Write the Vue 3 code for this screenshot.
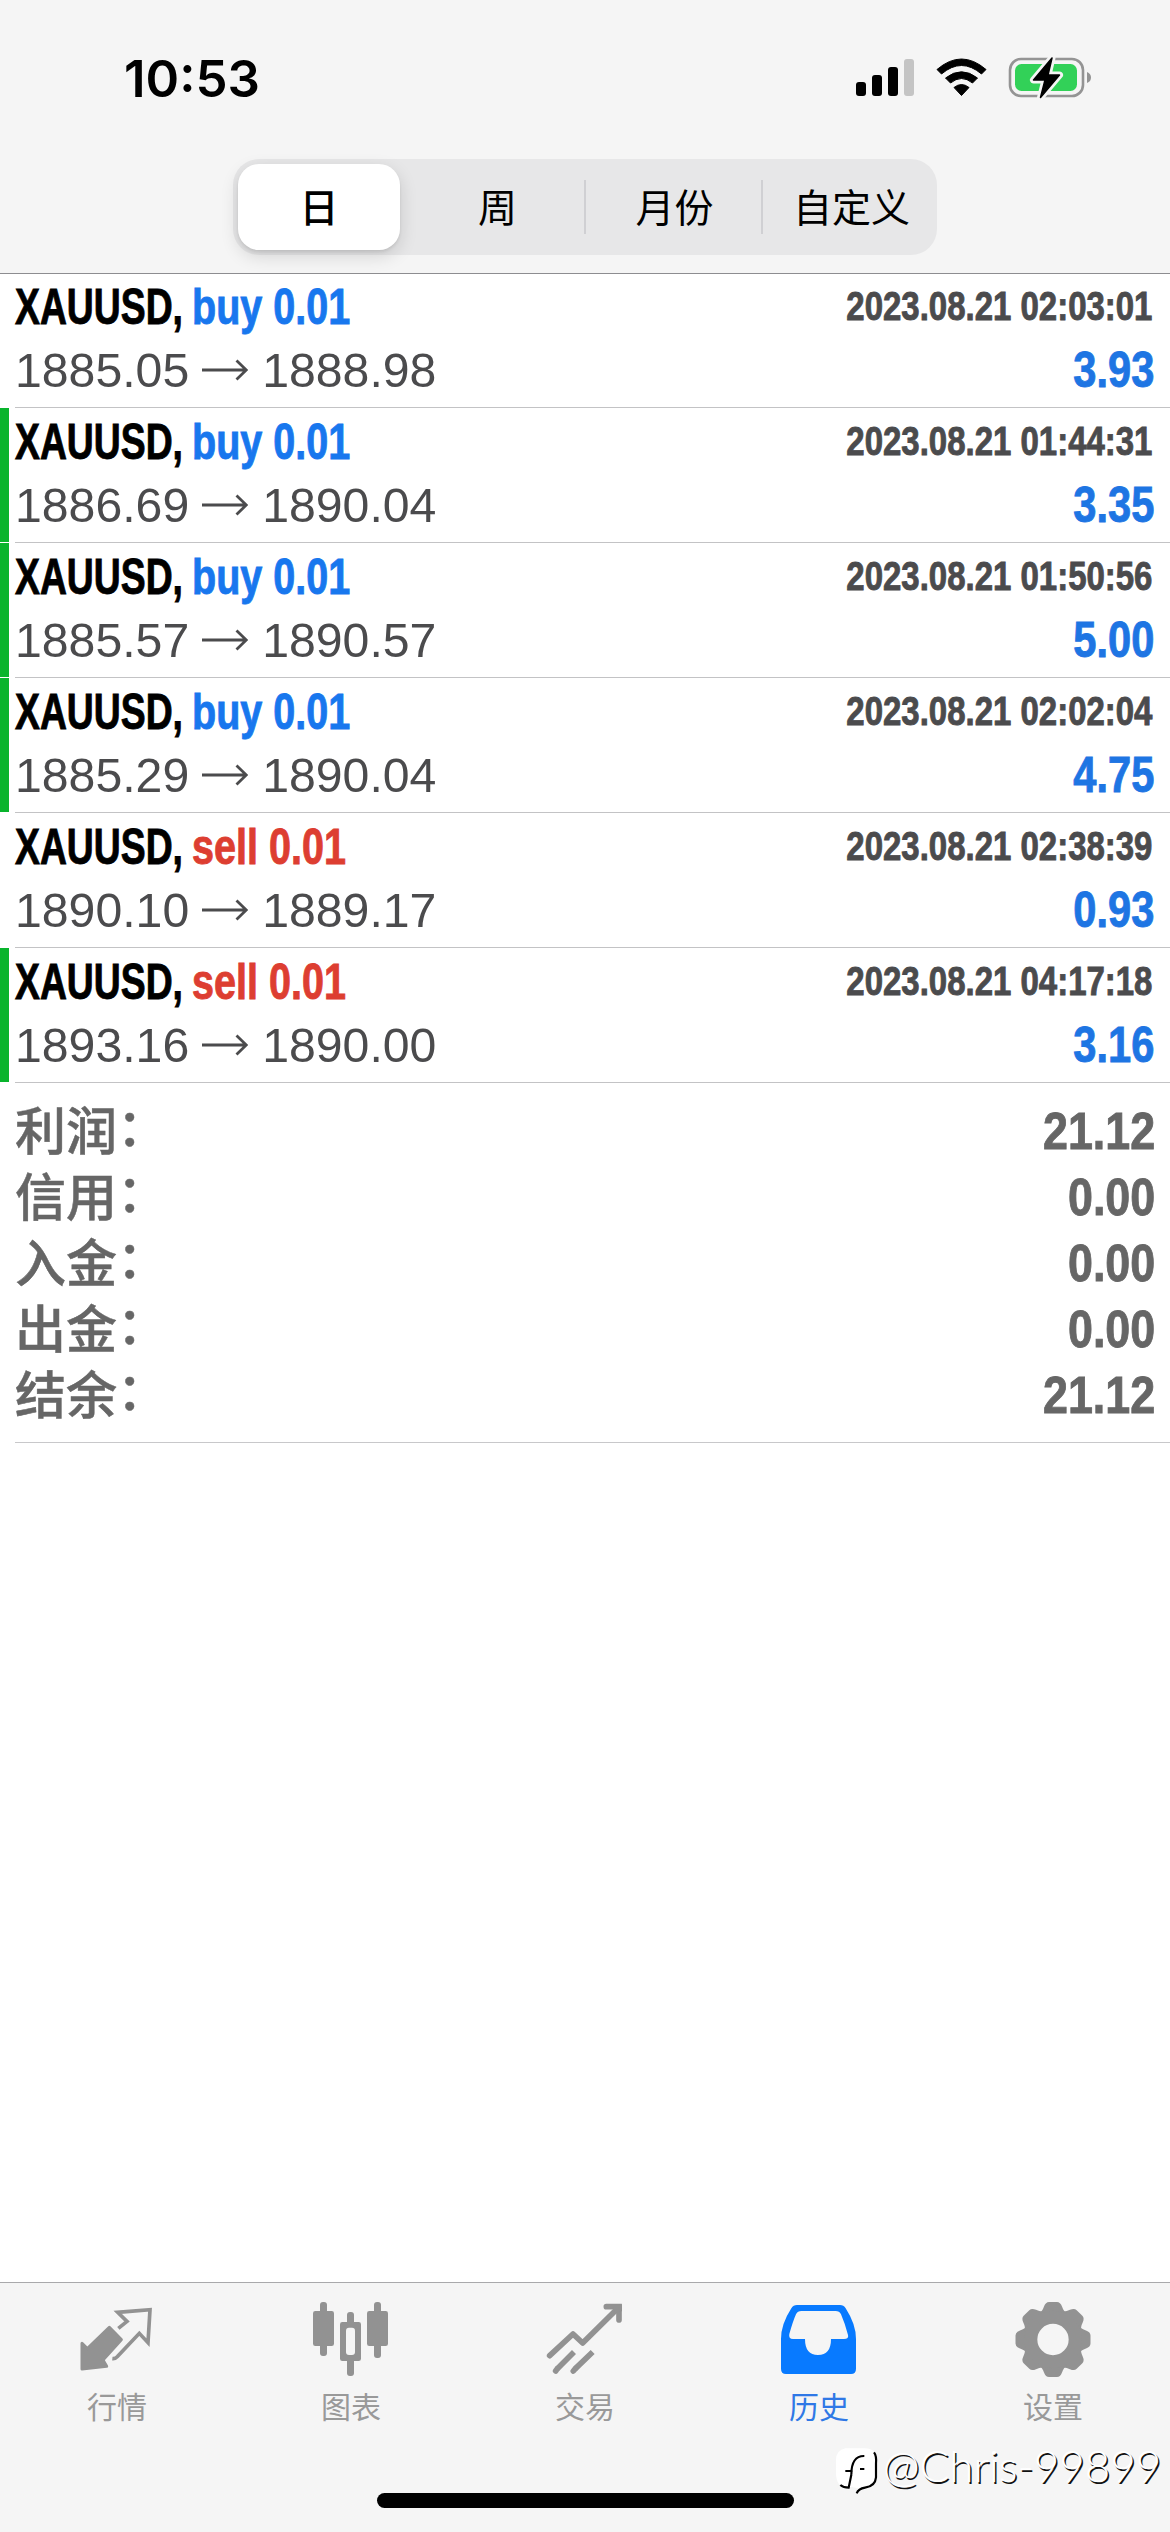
<script setup>
const segments = ['日', '周', '月份', '自定义']

const deals = [
  { side: 'buy', open: '1885.05', close: '1888.98', time: '2023.08.21 02:03:01', profit: '3.93', mark: false },
  { side: 'buy', open: '1886.69', close: '1890.04', time: '2023.08.21 01:44:31', profit: '3.35', mark: true },
  { side: 'buy', open: '1885.57', close: '1890.57', time: '2023.08.21 01:50:56', profit: '5.00', mark: true },
  { side: 'buy', open: '1885.29', close: '1890.04', time: '2023.08.21 02:02:04', profit: '4.75', mark: true },
  { side: 'sell', open: '1890.10', close: '1889.17', time: '2023.08.21 02:38:39', profit: '0.93', mark: false },
  { side: 'sell', open: '1893.16', close: '1890.00', time: '2023.08.21 04:17:18', profit: '3.16', mark: true },
]

const totals = [
  ['利润', '21.12'],
  ['信用', '0.00'],
  ['入金', '0.00'],
  ['出金', '0.00'],
  ['结余', '21.12'],
]
</script>

<template>
  <div class="screen">
    <header class="top">
      <div class="status">
        <span class="clock">10:53</span>
        <svg class="indicators" width="240" height="46" viewBox="852 54 240 46">
          <rect x="856" y="82" width="10" height="14" rx="3" />
          <rect x="872" y="75" width="10" height="21" rx="3" />
          <rect x="888" y="67" width="10" height="29" rx="3" />
          <rect x="904" y="59" width="10" height="37" rx="3" fill="#c4c4c4" />
          <path d="M937 69.500Q961.500 48.500 986 69.500L981.500 74Q961.500 57 941.500 74Z" stroke="#000" stroke-width="1" stroke-linejoin="round" />
          <path d="M945.500 78Q961.500 65.500 977.500 78L972.500 83Q961.500 74 950.500 83Z" stroke="#000" stroke-width="1" stroke-linejoin="round" />
          <path d="M954 87.500Q961.500 81.500 969 87.500L961.500 95.500Z" stroke="#000" stroke-width="1" stroke-linejoin="round" />
          <rect x="1010" y="59" width="73" height="37" rx="11" fill="none" stroke="#949494" stroke-width="2.600" />
          <rect x="1015" y="64" width="62" height="27" rx="6.500" fill="#32d158" />
          <path d="M1087 72Q1091 73.500 1091 77.500T1087 83Z" fill="#949494" />
          <path d="M1052 58L1033.500 80H1045L1040.500 97.500L1059.500 75H1048Z" fill="#000" stroke="#f5f5f5" stroke-width="7" stroke-linejoin="round" />
          <path d="M1052 58L1033.500 80H1045L1040.500 97.500L1059.500 75H1048Z" stroke="#000" stroke-width="1.500" stroke-linejoin="round" />
        </svg>
      </div>
      <div class="segmented">
        <div v-for="(s, i) in segments" :key="s" class="segment" :class="{ active: i === 0, split: i > 1 }">
          <span>{{ s }}</span>
        </div>
      </div>
    </header>

    <main class="content">
      <section v-for="(d, i) in deals" :key="i" class="deal" :class="{ marked: d.mark }">
        <div class="deal-body">
          <div class="line">
            <div class="title">
              <div class="symbol-cell"><span class="condensed symbol">XAUUSD,</span></div>
              <span class="condensed side" :class="d.side">{{ d.side }} 0.01</span>
            </div>
            <span class="condensed time">{{ d.time }}</span>
          </div>
          <div class="line">
            <div class="prices">
              <span>{{ d.open }}</span>
              <svg width="46" height="22" viewBox="0 0 46 22" fill="none" stroke="#4b4b4d" stroke-width="2.800"><path d="M0 11H44M34.500 1.500L44.300 11L34.500 20.500" /></svg>
              <span>{{ d.close }}</span>
            </div>
            <span class="condensed profit">{{ d.profit }}</span>
          </div>
        </div>
      </section>

      <section class="totals">
        <div v-for="t in totals" :key="t[0]" class="total">
          <span class="label">{{ t[0] }}<span class="colon">：</span></span>
          <span class="condensed amount">{{ t[1] }}</span>
        </div>
      </section>
    </main>

    <nav class="tabs">
      <div class="tab">
        <svg viewBox="234 90 234 234">
          <path d="M328 172L364 209L309 270L320 289L246 297V220L262 236Z" fill="currentColor" stroke="currentColor" stroke-width="9" stroke-linejoin="round" />
          <path d="M355 175L381 154L353 127L450 119L444 218L418 190L353 259Q346 267 337 266" fill="none" stroke="currentColor" stroke-width="11" />
        </svg>
        <span>行情</span>
      </div>
      <div class="tab">
        <svg viewBox="936 90 234 234" fill="currentColor">
          <rect x="960" y="96" width="21" height="162" rx="9" />
          <rect x="939" y="123" width="63" height="105" rx="7" />
          <rect x="1122" y="96" width="21" height="168" rx="9" />
          <rect x="1101" y="123" width="63" height="105" rx="7" />
          <rect x="1041" y="126" width="21" height="192" rx="9" />
          <rect x="1020" y="156" width="63" height="117" rx="7" />
          <rect x="1038" y="173" width="27" height="82" rx="9" fill="#f5f5f5" />
        </svg>
        <span>图表</span>
      </div>
      <div class="tab">
        <svg viewBox="198 90 234 234" fill="none" stroke="currentColor" stroke-width="17">
          <path d="M209 257L279 192L308 219L412 116" stroke-linecap="round" stroke-linejoin="round" />
          <path d="M379 110H417V150" stroke-linecap="round" />
          <path d="M426 124V106Q426 102 422 102H396L404 126Z" fill="currentColor" stroke="none" />
          <path d="M282 246L232 296M338 246L286 296" />
          <path d="M232 296L227 303M286 296L280 303" stroke-linecap="round" />
        </svg>
        <span>交易</span>
      </div>
      <div class="tab current">
        <svg viewBox="900 90 234 234" fill="currentColor">
          <path fill-rule="evenodd" d="M951 105H1080Q1091 105 1097 115Q1128 163 1128 207V296Q1128 312 1113 312H918Q903 312 903 296V207Q903 163 934 115Q940 105 951 105ZM964 123Q953 123 948 133Q939 153 928 192Q925 207 939 207H975Q975 255 1014 255Q1053 255 1053 207H1092Q1107 207 1104 195Q1096 163 1083 133Q1078 123 1067 123Z" />
        </svg>
        <span>历史</span>
      </div>
      <div class="tab">
        <svg viewBox="-117 -118.500 234 234" fill="currentColor">
          <defs>
            <path id="cog-tooth" d="M-42 -78Q-32 -84 -27 -99Q-22 -112.500 -12 -112.500H12Q22 -112.500 27 -99Q32 -84 42 -78L30 -60H-30Z" />
          </defs>
          <use v-for="n in 8" :key="n" href="#cog-tooth" :transform="`rotate(${n * 45})`" />
          <circle r="66.500" fill="none" stroke="currentColor" stroke-width="39" />
        </svg>
        <span>设置</span>
      </div>
    </nav>

    <div class="home-bar"></div>

    <div class="watermark">
      <svg width="46" height="50" viewBox="72 528 138 150">
        <path d="M106 535H164Q200 535 200 571V620Q200 652 165 655Q146 658 140 670Q137 663 145 655L121 650L112 658Q78 650 78 610V571Q78 540 106 535Z" fill="#fff" />
        <path d="M192 547Q200 557 198 580V622Q196 648 165 653Q145 656 140 670M91 645Q100 653 116 653L124 614M106 603H128M124 614Q124 557 163 558M150 597H163" fill="none" stroke="#000" stroke-width="6.500" />
      </svg>
      <span>@Chris-99899</span>
    </div>
  </div>
</template>

<style>
body {
  margin: 0;
  background: #fff;
}
</style>

<style scoped>
.screen {
  position: relative;
  display: flex;
  flex-direction: column;
  width: 1170px;
  height: 2532px;
  overflow: hidden;
  background: #fff;
  font-family: "Liberation Sans", "Noto Sans CJK SC", sans-serif;
}
.top {
  box-sizing: border-box;
  flex: none;
  height: 274px;
  border-bottom: 1px solid #8d8d90;
  background: #f5f5f5;
}
.status {
  display: flex;
  justify-content: space-between;
  box-sizing: border-box;
  height: 159px;
  padding: 54px 78px 0 124px;
}
.clock {
  font: 600 51px/49px Inter, sans-serif;
}
.segmented {
  display: flex;
  box-sizing: border-box;
  width: 704px;
  height: 96px;
  margin: 0 auto;
  padding: 5px;
  border-radius: 26px;
  background: #e7e7e8;
}
.segment {
  position: relative;
  display: flex;
  flex: 0 0 177px;
  align-items: center;
  justify-content: center;
  box-sizing: border-box;
  padding-bottom: 5px;
  font: 400 39px/56px "Noto Sans CJK SC", sans-serif;
}
.segment.active {
  flex-basis: 162px;
  margin-right: 9px;
  border-radius: 21px;
  background: #fff;
  box-shadow: 0 6px 18px rgba(0, 0, 0, 0.14), 0 2px 3px rgba(0, 0, 0, 0.08);
  font-weight: 500;
}
.segment.split::before {
  content: "";
  position: absolute;
  left: -2px;
  top: 16px;
  width: 2px;
  height: 54px;
  background: #d0d0d3;
}
.content {
  flex: 1;
}
.deal {
  box-sizing: border-box;
  height: 135px;
  padding-left: 15px;
}
.deal:first-child {
  height: 134px;
}
.deal:first-child .deal-body {
  padding-top: 7px;
}
.deal.marked {
  background: linear-gradient(#09b42c, #09b42c) 0 0 / 9px 134px no-repeat;
}
.deal-body {
  box-sizing: border-box;
  height: 100%;
  padding: 8px 16px 0 0;
  border-bottom: 1px solid #c3c3c5;
}
.line {
  display: flex;
  align-items: flex-start;
  justify-content: space-between;
  height: 63px;
}
.condensed {
  display: block;
  flex: none;
  font-size: 49.500px;
  font-weight: 700;
  line-height: 52px;
  white-space: pre;
  transform-origin: 100% 0;
  -webkit-text-stroke: 0.900px currentColor;
}
.title {
  display: flex;
}
.symbol-cell {
  display: flex;
  width: 176.500px;
}
.symbol {
  color: #000;
  transform: scaleX(0.754);
  transform-origin: 0 0;
}
.side {
  transform: scaleX(0.799);
  transform-origin: 0 0;
}
.buy {
  color: #1877ee;
}
.sell {
  color: #dd3e31;
}
.time {
  margin-right: 2px;
  color: #4b4b4d;
  font-size: 40px;
  line-height: 50px;
  transform: scaleX(0.824);
}
.profit {
  color: #1e75e3;
  transform: scaleX(0.841);
}
.prices {
  display: flex;
  align-items: center;
  height: 52px;
  color: #4b4b4d;
  font-size: 48.200px;
  line-height: 52px;
}
.prices svg {
  margin: 0 14px 0 13px;
}
.totals {
  box-sizing: border-box;
  height: 360px;
  margin-left: 15px;
  padding: 15px 15px 0 0;
  border-bottom: 1px solid #c8c8ca;
}
.total {
  display: flex;
  align-items: flex-start;
  justify-content: space-between;
  height: 66px;
  color: #666;
}
.label {
  font: 500 51px/60px "Noto Sans CJK SC", sans-serif;
  -webkit-text-stroke: 0.500px currentColor;
}
.colon {
  position: relative;
  top: -4px;
}
.amount {
  font-size: 52px;
  line-height: 66px;
  transform: scaleX(0.862);
}
.tabs {
  display: flex;
  flex: none;
  box-sizing: border-box;
  height: 250px;
  border-top: 1px solid #a9a9ab;
  background: #f5f5f5;
}
.tab {
  display: flex;
  flex: 1;
  flex-direction: column;
  align-items: center;
  padding-top: 17px;
  color: #929292;
}
.tab svg {
  width: 78px;
  height: 78px;
}
.tab span {
  margin-top: 7px;
  color: #999;
  font: 400 30px/40px "Noto Sans CJK SC", sans-serif;
}
.tab.current {
  color: #087aff;
}
.tab.current span {
  color: #2f78e6;
}
.home-bar {
  position: absolute;
  left: 377px;
  bottom: 24px;
  width: 417px;
  height: 15px;
  border-radius: 8px;
  background: #000;
}
.watermark {
  position: absolute;
  left: 834px;
  top: 2446px;
  display: flex;
  align-items: flex-start;
  color: #fff;
  font: 300 44px/50px Lato, sans-serif;
  text-shadow: 1.500px 1.500px 0 #111;
}
.watermark span {
  margin: -6px 0 0 3px;
}
</style>
